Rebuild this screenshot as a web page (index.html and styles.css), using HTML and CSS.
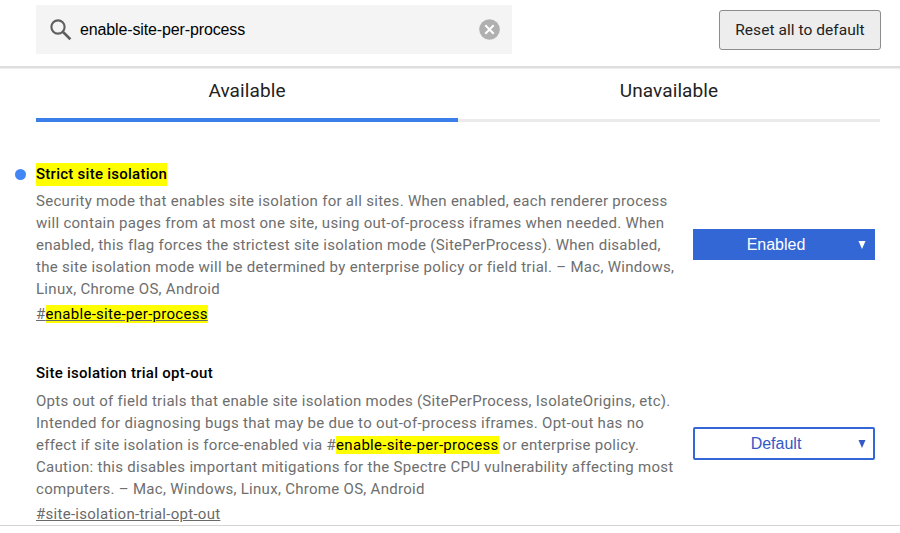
FILE: index.html
```
<!DOCTYPE html>
<html lang="en">
<head>
    <meta charset="utf-8">
    <title>Experiments</title>
    <link rel="stylesheet" href="styles.css">
</head>
<body>
    <header class="header">
        <div class="search">
            <svg class="search-icon" width="22" height="22" viewBox="0 0 22 22">
                <circle cx="8" cy="8" r="6.6" fill="none" stroke="#5f5f5f" stroke-width="2.1"/>
                <path d="M12.8 12.8L20.4 20.2" stroke="#5f5f5f" stroke-width="2.6"/>
            </svg>
            <span class="search-text">enable-site-per-process</span>
            <svg class="clear-icon" width="21" height="21" viewBox="0 0 21 21">
                <circle cx="10.5" cy="10.5" r="10.3" fill="#b0b0b0"/>
                <path d="M6.3 6.3L14.7 14.7M14.7 6.3L6.3 14.7" stroke="#fff" stroke-width="2"/>
            </svg>
        </div>
        <button class="reset">Reset all to default</button>
    </header>

    <nav class="tabs">
        <a class="tab selected">Available</a>
        <a class="tab">Unavailable</a>
    </nav>

    <main class="flags">
        <section class="flag changed">
            <div class="info">
                <h3 class="name"><mark>Strict site isolation</mark></h3>
                <p class="desc">
                    Security mode that enables site isolation for all sites. When enabled, each renderer process<br>
                    will contain pages from at most one site, using out-of-process iframes when needed. When<br>
                    enabled, this flag forces the strictest site isolation mode (SitePerProcess). When disabled,<br>
                    the site isolation mode will be determined by enterprise policy or field trial. – Mac, Windows,<br>
                    Linux, Chrome OS, Android
                </p>
                <a class="permalink">#<mark>enable-site-per-process</mark></a>
            </div>
            <div class="select enabled">
                <span class="value">Enabled</span>
                <svg width="8" height="8" viewBox="0 0 8 8"><path d="M0.5 0H7.5L4 8Z" fill="currentColor"/></svg>
            </div>
        </section>

        <section class="flag">
            <div class="info">
                <h3 class="name">Site isolation trial opt-out</h3>
                <p class="desc">
                    Opts out of field trials that enable site isolation modes (SitePerProcess, IsolateOrigins, etc).<br>
                    Intended for diagnosing bugs that may be due to out-of-process iframes. Opt-out has no<br>
                    effect if site isolation is force-enabled via #<mark>enable-site-per-process</mark> or enterprise policy.<br>
                    Caution: this disables important mitigations for the Spectre CPU vulnerability affecting most<br>
                    computers. – Mac, Windows, Linux, Chrome OS, Android
                </p>
                <a class="permalink">#site-isolation-trial-opt-out</a>
            </div>
            <div class="select">
                <span class="value">Default</span>
                <svg width="8" height="8" viewBox="0 0 8 8"><path d="M0.5 0H7.5L4 8Z" fill="currentColor"/></svg>
            </div>
        </section>
    </main>
</body>
</html>
```
FILE: styles.css
```
* {
    box-sizing: border-box;
}
html,
body {
    margin: 0;
    background: #fff;
}
body {
    height: 533px;
    overflow: hidden;
    font-family: Roboto, sans-serif;
    font-size: 15px;
    color: #000;
}

.header {
    display: flex;
    justify-content: space-between;
    align-items: flex-start;
    height: 68px;
    padding: 5px 19px 0 36px;
    border-bottom: 2px solid #dedede;
    box-shadow: 0 1px 1px #eee;
}
.search {
    display: flex;
    align-items: center;
    width: 476px;
    height: 49px;
    padding: 0 12px 0 14px;
    background: #f4f4f4;
}
.search-text {
    flex: 1;
    margin-left: 8px;
    font-family: "Liberation Sans", Arial, sans-serif;
    font-size: 16px;
    letter-spacing: -0.13px;
}
.reset {
    width: 162px;
    height: 40px;
    margin-top: 5px;
    padding: 0;
    border: 1px solid #8c8c8c;
    border-radius: 3px;
    background: #ededed;
    font-family: Roboto, sans-serif;
    font-size: 15.5px;
    letter-spacing: 0.05px;
    color: #222;
}

.tabs {
    display: flex;
    height: 53px;
    margin: 0 20px 0 36px;
}
.tab {
    position: relative;
    flex: 1;
    height: 54px;
    line-height: 46px;
    text-align: center;
    font-size: 19px;
    letter-spacing: 0.1px;
    color: #222;
}
.tab::after {
    content: "";
    position: absolute;
    left: 0;
    right: 0;
    bottom: 0;
    height: 3px;
    background: #ebebeb;
}
.tab.selected::after {
    height: 4px;
    background: #3b7de9;
}

.flags {
    height: 405px;
    padding: 42px 25px 0 36px;
    border-bottom: 1px solid #d4d4d4;
}
.flag {
    position: relative;
    display: flex;
    justify-content: space-between;
    align-items: center;
    height: 163px;
    margin-bottom: 36px;
}
.flag.changed::before {
    content: "";
    position: absolute;
    top: 6px;
    left: -21px;
    width: 11px;
    height: 11px;
    border-radius: 50%;
    background: #4285f4;
}
.name {
    margin: 0 0 4px;
    font-size: 15px;
    font-weight: 500;
    line-height: 23px;
    letter-spacing: 0.26px;
}
.flag:not(.changed) .name {
    margin: 1px 0 5px;
}
.name mark {
    display: inline-block;
}
.desc {
    margin: 0;
    line-height: 22.1px;
    letter-spacing: 0.29px;
    white-space: nowrap;
    color: #6e6e6e;
}
.permalink {
    display: block;
    margin-top: 3px;
    line-height: 23px;
    letter-spacing: 0.28px;
    color: #6a6a6a;
    text-decoration: underline;
}
mark {
    background: #ff0;
    color: #000;
}

.select {
    display: flex;
    align-items: center;
    width: 182px;
    height: 33px;
    padding-right: 7px;
    border: 2px solid #3367d6;
    border-radius: 2px;
    font-family: "Liberation Sans", Arial, sans-serif;
    font-size: 16px;
    color: #3458c8;
}
.select.enabled {
    height: 31px;
    border-radius: 0;
    background: #3367d6;
    color: #fff;
}
.value {
    flex: 1;
    padding-right: 1px;
    text-align: center;
}
```
